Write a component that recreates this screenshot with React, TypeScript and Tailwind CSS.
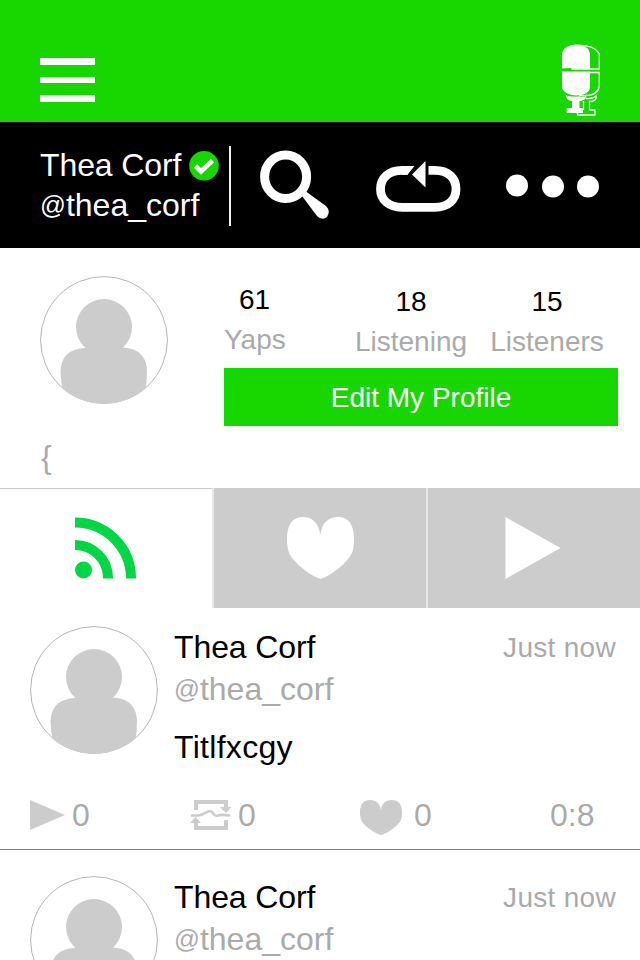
import React from "react";

function Avatar() {
  return (
    <svg className="block h-32 w-32 shrink-0" viewBox="0 0 128 128">
      <defs>
        <clipPath id="avatar-clip">
          <circle cx="64" cy="64" r="63.8" />
        </clipPath>
      </defs>
      <circle cx="64" cy="64" r="63.4" fill="#fff" stroke="#b4b4b4" strokeWidth="1" />
      <g clipPath="url(#avatar-clip)" fill="#ccc">
        <circle cx="64" cy="51" r="28" />
        <path d="M45.500 72V71.500L45 71.500Q64 60 83 71.500Q107 73 107 96Q107 106 105 117V128H23V117Q21 106 20.500 96Q21 73 45.500 72Z" />
      </g>
    </svg>
  );
}

function Handle() {
  return (
    <>
      <span className="relative -top-[2px] text-[25.500px] leading-none">@</span>thea_corf
    </>
  );
}

function Mic() {
  return (
    <svg className="block h-[76px] w-[42px]" viewBox="0 0 42 76" fill="none">
      <path d="M18 3.500Q34 3 39.300 11.500V27H11.500M30 30.500H39.300V45Q37 55 19 53.500" stroke="#fff" strokeWidth="1.300" />
      <path d="M2 26.500V13C2 6 9 2.500 16 2.500C24 2.500 30 6 30 13V26.500H11V26Z" fill="#fff" />
      <path d="M2 29.500H30V45C30 50 24 53.500 16 53.500C8 53.500 2 49 2 45Z" fill="#fff" />
      <path d="M5.500 52.500Q8 55 13 54.500H19Q24 55.500 26 53.500V56Q24 59 19.500 59V66H23V71H6.700V66H12V59Q6 58.500 5.500 52.500Z" fill="#fff" />
      <path d="M26 56.500Q33 57 36 54V56.500Q35 59.500 29.500 59.500V68H35V73H17.500V71M23.500 59V68" stroke="#fff" strokeWidth="1.300" />
    </svg>
  );
}

function Heart({ className }: { className: string }) {
  return (
    <svg className={className} viewBox="0 0 66 62" preserveAspectRatio="none" fill="currentColor">
      <path d="M33 18C31 5 24 0 16 0C5 0 0 8 0 22C0 32 2 37 5 41C12 50 24 59 33 62C42 59 54 50 61 41C65 36 66 30 66 22C66 8 61 0 50 0C42 0 34 5 33 18Z" />
    </svg>
  );
}

function Reyap() {
  return (
    <svg className="block h-8 w-[42px]" viewBox="0 0 42 32" fill="none">
      <path d="M6 11V3H36V9M36 21V29H6V21" stroke="#ccc" strokeWidth="4" />
      <path d="M30 8H41.500L36 14ZM0 24L5.500 18L11 24Z" fill="#ccc" />
      <path d="M1 16.500H8C14 16.500 16 12 20 12C23 12 23 17 27 17Q30 15 40 16.500" stroke="#ccc" strokeWidth="2.600" />
    </svg>
  );
}

function Stat({ value, label, className }: { value: string; label: string; className: string }) {
  return (
    <div className={`flex flex-col gap-2 text-center text-[28px] leading-8 ${className}`}>
      <span>{value}</span>
      <span className="text-[#aaa]">{label}</span>
    </div>
  );
}

function FeedItem({ title, length }: { title?: string; length?: string }) {
  return (
    <article className="flex h-[242px] shrink-0 flex-col border-b border-[#808080] pt-[18px]">
      <div className="flex h-[169px] pr-6 pl-[30px]">
        <Avatar />
        <div className="mt-px ml-4 flex-1 text-[32px] leading-10">
          <div className="flex justify-between">
            <span className="tracking-[-0.1px]">Thea Corf</span>
            <span className="mt-px text-[28px] tracking-[0.3px] text-[#aaa]">Just now</span>
          </div>
          <div className="mt-px text-[#aaa]">
            <Handle />
          </div>
          {title && <div className="mt-[18px] tracking-[0.3px]">{title}</div>}
        </div>
      </div>
      {length && (
        <div className="flex h-10 items-center pl-[30px] text-[32px] leading-10 text-[#aaa]">
          <div className="flex w-40 items-center gap-[7px]">
            <svg className="block h-[30px] w-[35px]" viewBox="0 0 35 30">
              <path d="M0 0L35 15L0 30Z" fill="#ccc" />
            </svg>
            0
          </div>
          <div className="flex w-[170px] items-center gap-1.5">
            <Reyap />
            0
          </div>
          <div className="flex w-[190px] items-center gap-3">
            <Heart className="mt-1 block h-[35px] w-[42px] text-[#ccc]" />
            0
          </div>
          <span>{length}</span>
        </div>
      )}
    </article>
  );
}

export default function App() {
  return (
    <div className="flex h-[960px] w-[640px] flex-col overflow-hidden bg-white font-['Liberation_Sans',Arial,sans-serif] text-black">
      <header className="flex h-[122px] shrink-0 items-start justify-between bg-[#18d700] pr-[38px] pl-10">
        <div className="mt-[58px] flex flex-col gap-3">
          <span className="h-[6.500px] w-[55px] bg-white" />
          <span className="h-[6.500px] w-[55px] bg-white" />
          <span className="h-[6.500px] w-[55px] bg-white" />
        </div>
        <div className="mt-[42px]">
          <Mic />
        </div>
      </header>

      <section className="flex h-[126px] shrink-0 items-start bg-black pl-10 text-white">
        <div className="mt-[23px] w-[189px] text-[32px] leading-10">
          <div className="flex">
            <span className="w-[142px] tracking-[-0.1px] whitespace-nowrap">Thea Corf</span>
            <svg className="mt-1.5 ml-[7px] block h-[30px] w-[30px] shrink-0" viewBox="0 0 30 30">
              <circle cx="15" cy="14.800" r="14.800" fill="#18d700" />
              <path d="M6.500 15L12 20.500L23.500 9.500" stroke="#fff" strokeWidth="4.800" fill="none" />
            </svg>
          </div>
          <div>
            <Handle />
          </div>
        </div>
        <div className="mt-6 h-20 w-0.5 bg-[#eee]" />
        <svg className="mt-7 ml-[29px] block h-[70px] w-[70px]" viewBox="0 0 70 70">
          <ellipse cx="25.600" cy="26.700" rx="21" ry="21.700" fill="none" stroke="#fff" strokeWidth="9" />
          <path d="M42 46L46 41.500Q52 46 66 56Q71 61 67 67Q62 71 57 66Z" fill="#fff" />
        </svg>
        <svg className="mt-[38px] ml-[45px] block h-[54px] w-[87px]" viewBox="0 0 87 54">
          <path d="M33 10.300H27C14 10.300 5.500 18 5.500 29C5.500 40 14 47.300 27 47.300H60C73 47.300 81 40 81 29C81 18 73 10.300 60 10.300H53.500" fill="none" stroke="#fff" strokeWidth="8.800" />
          <path d="M31.500 16L40 5.900V16Z" fill="#000" />
          <path d="M27 6H39.500L32.500 14.700H27Z" fill="#fff" />
          <path d="M37 14.500L50.500 1V27.500Z" fill="#fff" />
        </svg>
        <svg className="mt-[51px] ml-11 block h-7 w-[94px]" viewBox="0 0 94 28" fill="#fff">
          <circle cx="11" cy="12.500" r="11" />
          <circle cx="47" cy="13.500" r="11" />
          <circle cx="82" cy="13.500" r="11" />
        </svg>
      </section>

      <section className="h-60 shrink-0 pt-7">
        <div className="flex">
          <div className="ml-10">
            <Avatar />
          </div>
          <div className="ml-14 w-[394px]">
            <div className="flex h-[92px] pt-2">
              <Stat value="61" label="Yaps" className="w-[61px]" />
              <Stat value="18" label="Listening" className="mt-0.5 ml-[68px] w-[116px]" />
              <Stat value="15" label="Listeners" className="mt-0.5 ml-5 w-[116px]" />
            </div>
            <button className="block h-[58px] w-full bg-[#18d700] pt-0.5 text-[28px] text-white">Edit My Profile</button>
          </div>
        </div>
        <div className="mt-[11px] ml-[41px] text-[32px] leading-10 text-[#aaa]">{"{"}</div>
      </section>

      <nav className="flex h-[120px] shrink-0 bg-[#e8e8e8]">
        <div className="mr-0.5 w-[212px] border-t border-[#ccc] bg-white">
          <svg className="mt-7 ml-[75px] block h-[62px] w-[62px]" viewBox="0 0 62 62">
            <circle cx="8.500" cy="53" r="8.500" fill="#00d646" />
            <path d="M0 28A33 33 0 0 1 33 61.500M0 5.500A56 56 0 0 1 56 61.500" fill="none" stroke="#00d646" strokeWidth="10" />
          </svg>
        </div>
        <div className="mr-0.5 flex w-[212px] justify-center bg-[#ccc] pt-[29px]">
          <Heart className="block h-[62px] w-[67px] text-white" />
        </div>
        <div className="w-[212px] bg-[#ccc] pt-[29px] pl-[77px]">
          <svg className="block h-[62px] w-[56px]" viewBox="0 0 56 62">
            <path d="M0.500 0L55.500 31L0.500 62Z" fill="#fff" />
          </svg>
        </div>
      </nav>

      <main className="flex flex-col gap-2">
        <FeedItem title="Titlfxcgy" length="0:8" />
        <FeedItem />
      </main>
    </div>
  );
}
